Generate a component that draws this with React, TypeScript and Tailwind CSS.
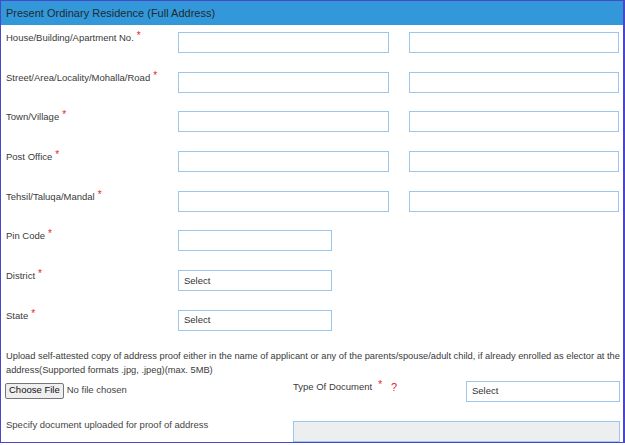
import React from "react";

const rows: { label: string; kind: "two" | "one" | "select" }[] = [
  { label: "House/Building/Apartment No.", kind: "two" },
  { label: "Street/Area/Locality/Mohalla/Road", kind: "two" },
  { label: "Town/Village", kind: "two" },
  { label: "Post Office", kind: "two" },
  { label: "Tehsil/Taluqa/Mandal", kind: "two" },
  { label: "Pin Code", kind: "one" },
  { label: "District", kind: "select" },
  { label: "State", kind: "select" },
];

function Star() {
  return <span className="text-[#e8231f] text-[10px] ml-[3px] relative -top-[2px]">*</span>;
}

export default function App() {
  return (
    <div
      className="w-[625px] h-[445px] bg-white text-[#3a3a3a]"
      style={{ fontFamily: '"Liberation Sans", Arial, sans-serif' }}
    >
      <div className="w-[625px] h-[443px] border-t border-l border-b border-r-2 border-[#4a47c9] overflow-hidden">
        <div className="h-[24px] bg-[#3398d9] pl-[5px] flex items-center text-[11px] text-[#1f2a33]">
          Present Ordinary Residence (Full Address)
        </div>

        <div className="pt-[7px]">
          {rows.map((r) => (
            <div key={r.label} className="flex h-[39.7px] text-[9.5px]">
              <div className="w-[177px] pl-[5px] leading-[12px]">
                {r.label}
                <Star />
              </div>
              {r.kind === "two" && (
                <>
                  <div className="w-[211px] h-[21px] border border-[#9cc6ec] bg-white" />
                  <div className="w-[210px] h-[21px] border border-[#9cc6ec] bg-white ml-[20px]" />
                </>
              )}
              {r.kind === "one" && (
                <div className="w-[154px] h-[21px] border border-[#9cc6ec] bg-white" />
              )}
              {r.kind === "select" && (
                <div className="w-[154px] h-[21px] border border-[#9cc6ec] bg-white flex items-center pl-[5px] text-[#333]">
                  Select
                </div>
              )}
            </div>
          ))}
        </div>

        <div className="pl-[5px] pr-[1px] text-[9.3px] leading-[14px] -mt-[1px] whitespace-nowrap">
          Upload self-attested copy of address proof either in the name of applicant or any of the parents/spouse/adult child, if already enrolled as elector at the
          <br />
          address(Supported formats .jpg, .jpeg)(max. 5MB)
        </div>

        <div className="flex items-start h-[40px] mt-[4px] text-[9.5px]">
          <div className="w-[292px] pl-[4px] flex items-center pt-[2px]">
            <span className="h-[16px] px-[3px] border border-[#767676] bg-[#efefef] rounded-[2px] flex items-center text-[#111]">
              Choose File
            </span>
            <span className="ml-[3px] text-[#444]">No file chosen</span>
          </div>
          <div className="w-[173px] -mt-[2px] flex items-center">
            Type Of Document
            <span className="text-[#e8231f] text-[10px] ml-[6px] relative -top-[2px]">*</span>
            <span className="text-[#e8231f] text-[11px] ml-[9px]">?</span>
          </div>
          <div className="w-[154px] h-[21px] border border-[#9cc6ec] bg-white flex items-center pl-[5px] text-[#333]">
            Select
          </div>
        </div>

        <div className="flex items-start text-[9.5px]">
          <div className="w-[292px] pl-[5px] -mt-[3px] text-[#444]">Specify document uploaded for proof of address</div>
          <div className="w-[327px] h-[21px] border border-[#9cc6ec] bg-[#eceef0]" />
        </div>
      </div>
    </div>
  );
}
